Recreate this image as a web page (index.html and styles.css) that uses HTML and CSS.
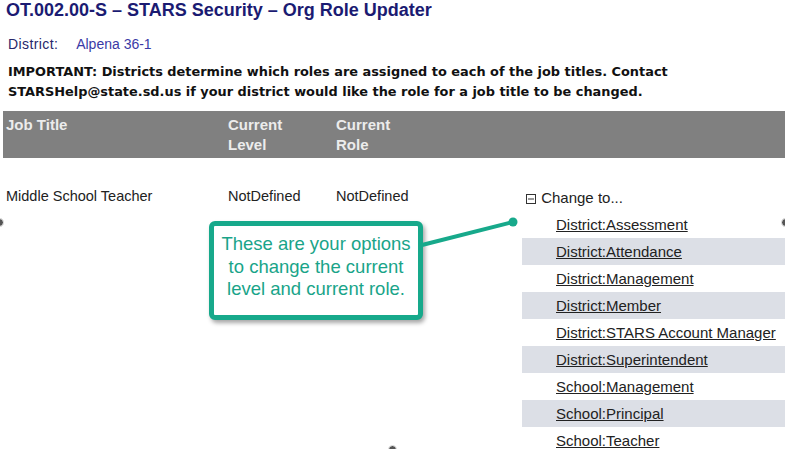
FILE: index.html
```html
<!DOCTYPE html>
<html lang="en">
<head>
    <meta charset="UTF-8">
    <title>Org Role Updater</title>
    <link rel="stylesheet" href="styles.css">
</head>
<body>
<div id="page">
    <h1 class="title">OT.002.00-S &ndash; STARS Security &ndash; Org Role Updater</h1>
    <div class="district">
        <span class="district-label">District:</span>
        <span class="district-name">Alpena 36-1</span>
    </div>
    <p class="notice">IMPORTANT: Districts determine which roles are assigned to each of the job titles. Contact<br>STARSHelp@state.sd.us if your district would like the role for a job title to be changed.</p>

    <table class="roles">
        <thead>
            <tr>
                <th class="col-title">Job Title</th>
                <th class="col-level">Current<br>Level</th>
                <th class="col-role">Current<br>Role</th>
                <th class="col-change"></th>
            </tr>
        </thead>
        <tbody>
            <tr>
                <td class="col-title">Middle School Teacher</td>
                <td class="col-level">NotDefined</td>
                <td class="col-role">NotDefined</td>
                <td class="col-change">
                    <div class="change-head">
                        <svg class="toggle" width="10" height="10" viewBox="0 0 10 10">
                            <rect x="0.5" y="0.5" width="9" height="9" fill="none" stroke="#333"/>
                            <line x1="2" y1="5" x2="8" y2="5" stroke="#333"/>
                        </svg>
                        Change to...
                    </div>
                    <ul class="options">
                        <li><a href="#">District:Assessment</a></li>
                        <li><a href="#">District:Attendance</a></li>
                        <li><a href="#">District:Management</a></li>
                        <li><a href="#">District:Member</a></li>
                        <li><a href="#">District:STARS Account Manager</a></li>
                        <li><a href="#">District:Superintendent</a></li>
                        <li><a href="#">School:Management</a></li>
                        <li><a href="#">School:Principal</a></li>
                        <li><a href="#">School:Teacher</a></li>
                    </ul>
                </td>
            </tr>
        </tbody>
    </table>

    <!-- annotation over the screenshot -->
    <div class="callout">These are your options to change the current level and current role.</div>
    <svg class="pointer" width="100" height="40" viewBox="0 0 100 40">
        <line x1="2" y1="30" x2="93" y2="7" stroke="#17a98b" stroke-width="4" stroke-linecap="round"/>
        <circle cx="93" cy="7" r="4.5" fill="#17a98b"/>
    </svg>
    <span class="handle handle-left"></span>
    <span class="handle handle-right"></span>
    <span class="handle handle-bottom"></span>
</div>
</body>
</html>
```

FILE: styles.css
```css
html, body {
    margin: 0;
    background: #fff;
}

#page {
    position: relative;
    width: 785px;
    height: 449px;
    overflow: hidden;
    font-family: "Liberation Sans", Arial, sans-serif;
    color: #222;
}

.title {
    margin: 0;
    padding-left: 6px;
    font-size: 18px;
    line-height: 20px;
    font-weight: bold;
    color: #1b1b72;
    white-space: nowrap;
}

.district {
    margin-top: 16px;
    padding-left: 8px;
    font-size: 14px;
    line-height: 16px;
}

.district-label {
    color: #27276b;
    letter-spacing: .4px;
}

.district-name {
    margin-left: 14px;
    color: #3a3aa6;
}

.notice {
    margin: 10px 0 0;
    padding-left: 8px;
    font-family: "DejaVu Sans", sans-serif;
    font-weight: bold;
    font-size: 12.9px;
    line-height: 20px;
    color: #111;
    white-space: nowrap;
}

.roles {
    margin: 9px 0 0 3px;
    width: 782px;
    border-collapse: collapse;
    table-layout: fixed;
}

.roles th {
    height: 45px;
    padding: 4px 0 3px 3px;
    box-sizing: border-box;
    background: #808080;
    color: #ececec;
    font-size: 15px;
    line-height: 20px;
    text-align: left;
    vertical-align: top;
}

.roles td {
    padding: 28px 0 0 3px;
    font-size: 14.5px;
    line-height: 20px;
    vertical-align: top;
}

.col-title { width: 222px; }
.col-level { width: 108px; }
.col-role { width: 186px; }

.roles td.col-change {
    padding-top: 26px;
    padding-left: 3px;
    font-size: 15px;
}

.change-head {
    padding-left: 4px;
    line-height: 27px;
    white-space: nowrap;
}

.toggle {
    vertical-align: -1px;
    margin-right: 1px;
}

.options {
    margin: 0;
    padding: 0;
    list-style: none;
}

.options li {
    height: 27px;
    line-height: 27px;
    padding-left: 34px;
    white-space: nowrap;
}

.options li:nth-child(even) {
    background: #dcdfe6;
}

.options a {
    color: #222;
    text-decoration: underline;
}

.callout {
    position: absolute;
    left: 209px;
    top: 221px;
    width: 204px;
    height: 82px;
    padding-top: 7px;
    box-sizing: content-box;
    border: 5px solid #17a98b;
    border-radius: 6px;
    background: #fff;
    box-shadow: 2px 3px 4px rgba(0, 0, 0, .35);
    color: #19a489;
    font-size: 18.5px;
    line-height: 22.5px;
    text-align: center;
}

.pointer {
    position: absolute;
    left: 420px;
    top: 215px;
}

.handle {
    position: absolute;
    width: 7px;
    height: 7px;
    border-radius: 50%;
    background: #555;
    border: 1px solid #eee;
}

.handle-left { left: -5px; top: 218px; }
.handle-right { left: 781px; top: 218px; }
.handle-bottom { left: 388px; top: 445px; }
```
